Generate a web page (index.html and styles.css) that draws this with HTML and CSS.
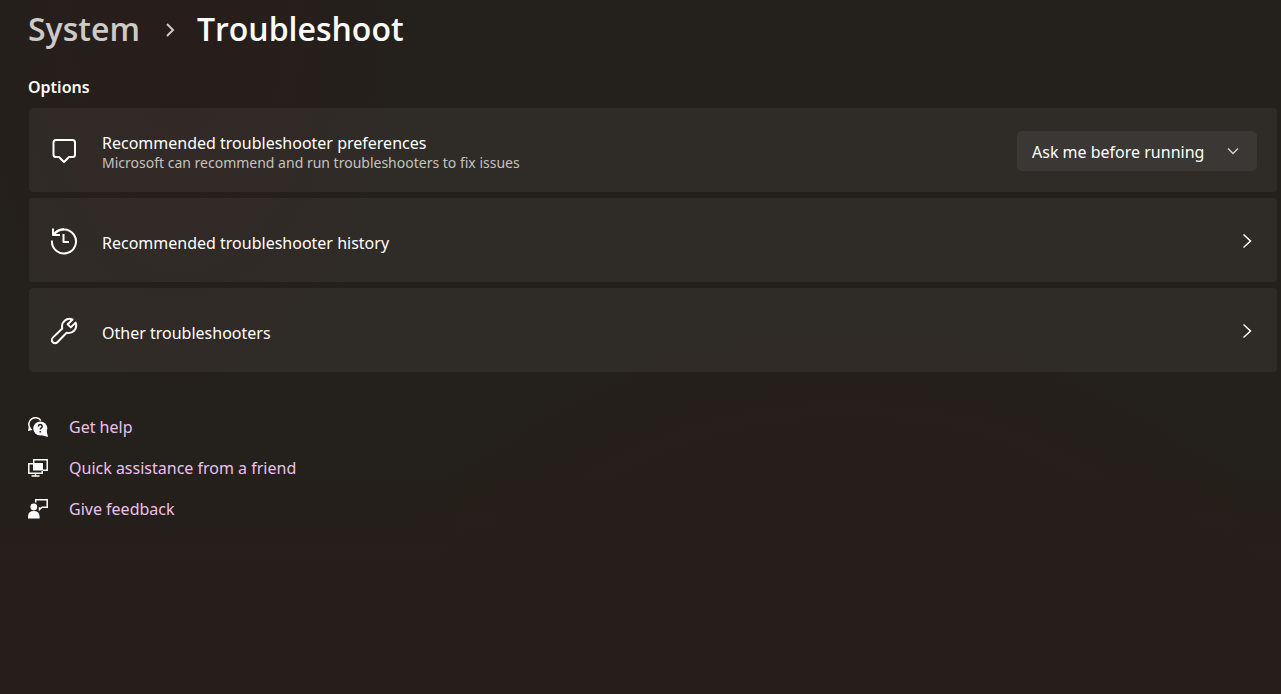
FILE: index.html
```html
<!DOCTYPE html>
<html lang="en">
<head>
<meta charset="utf-8">
<title>System - Troubleshoot</title>
<meta name="viewport" content="width=device-width, initial-scale=1">
<link rel="stylesheet" href="styles.css">
</head>
<body>
<main class="page">
  <nav class="breadcrumb" aria-label="Breadcrumb">
    <a class="crumb" href="#system">System</a>
    <svg class="crumb-sep" viewBox="0 0 12 18" aria-hidden="true"><path d="M3 4l6 6-6 6"/></svg>
    <h1 class="title">Troubleshoot</h1>
  </nav>

  <h2 class="section">Options</h2>
  <div class="cards">
    <div class="card">
      <svg class="icon" viewBox="0 0 28 28" aria-hidden="true"><path d="M6 3H22.500Q25 3 25 5.500V17.500Q25 20 22.500 20H19L14 25L9 20H6Q3.500 20 3.500 17.500V5.500Q3.500 3 6 3Z"/></svg>
      <div class="text">
        <label class="name" for="pref">Recommended troubleshooter preferences</label>
        <span class="desc">Microsoft can recommend and run troubleshooters to fix issues</span>
      </div>
      <div class="dropdown">
        <select id="pref" class="select">
          <option>Ask me before running</option>
        </select>
        <svg class="caret" viewBox="0 0 12 12" aria-hidden="true"><path d="M1 3.500l5 5 5-5"/></svg>
      </div>
    </div>

    <button class="card" type="button">
      <svg class="icon" viewBox="0 0 28 28" aria-hidden="true"><path d="M2 13.500A12 12 0 1 0 4.200 7.500"/><path d="M3 1.500V8H10"/><path d="M3.500 8A12 12 0 0 1 14 2.200"/><path d="M13.500 7V15H19"/></svg>
      <span class="name">Recommended troubleshooter history</span>
      <svg class="chevron" viewBox="0 0 10 16" aria-hidden="true"><path d="M1.500 1.500L8.500 8l-7 6.500"/></svg>
    </button>

    <button class="card" type="button">
      <svg class="icon" viewBox="0 0 28 28" aria-hidden="true"><path d="M22.500 2.500A7.600 7.600 0 0 0 12.300 11.500L2.800 20.600A3.200 3.200 0 0 0 7.400 25.200L16.600 15.800A7.600 7.600 0 0 0 25.600 5.600L20.800 10.400L17.700 7.300Z"/></svg>
      <span class="name">Other troubleshooters</span>
      <svg class="chevron" viewBox="0 0 10 16" aria-hidden="true"><path d="M1.500 1.500L8.500 8l-7 6.500"/></svg>
    </button>
  </div>

  <ul class="links">
    <li>
      <svg class="link-icon" viewBox="0 0 20 20" aria-hidden="true"><path class="line" d="M2 11A6 6 0 1 1 12.800 3.500"/><path d="M0 14l1-5 3.500 4z"/><circle cx="12.300" cy="11.500" r="7"/><path d="M18.500 13.500L20 20l-7-2z"/><path class="mark" d="M10.400 9.400a1.900 1.900 0 1 1 2.900 1.600q-1 .6-1 1.600M12.300 14v1.400"/></svg>
      <a href="#help">Get help</a>
    </li>
    <li>
      <svg class="link-icon" viewBox="0 0 20 20" aria-hidden="true"><path class="line" d="M5.700 5V1.700h13.500v10.600H15"/><path class="line" d="M5 5.700H.8v9.600h13.400V13M7.500 15.300V18M3.500 18h8"/><path d="M5 5h10v7.500H5z"/></svg>
      <a href="#assist">Quick assistance from a friend</a>
    </li>
    <li>
      <svg class="link-icon" viewBox="0 0 20 20" aria-hidden="true"><circle cx="5.800" cy="8" r="3.400"/><path d="M0 19.500v-2q0-5.500 5.800-5.500t5.800 5.500v2z"/><path class="line" d="M7.700 3.500V.8h11.500v7.400H14l-2.500 2.300V8.200"/></svg>
      <a href="#feedback">Give feedback</a>
    </li>
  </ul>
</main>
</body>
</html>
```

FILE: styles.css
```css
* {
  box-sizing: border-box;
}

body {
  margin: 0;
  min-height: 100vh;
  font-family: "Noto Sans", "Open Sans", sans-serif;
  font-size: 16px;
  line-height: 24px;
  color: #fff;
  background:
    radial-gradient(ellipse 18% 60% at 14% 0, #271e1b 20%, transparent),
    radial-gradient(ellipse 40% 54% at 66% 100%, #271e1b 60%, transparent),
    linear-gradient(#24201b 66%, #271e1b 88%);
}

.page {
  padding: 5px 4px 24px 28px;
}

.breadcrumb {
  display: flex;
  align-items: center;
}

.crumb,
.title {
  margin: 0;
  font-family: "Open Sans", "Noto Sans", sans-serif;
  font-size: 32px;
  font-weight: 600;
  line-height: 48px;
}

.crumb {
  color: #cdcac8;
  text-decoration: none;
}

.crumb-sep {
  width: 12px;
  height: 18px;
  margin: 0 21px 0 24px;
  fill: none;
  stroke: #cdcac8;
  stroke-width: 2;
}

.section {
  margin: 22px 0 9px;
  font-size: 16px;
  font-weight: 600;
  line-height: 24px;
}

.cards {
  display: grid;
  gap: 6px;
  padding-left: 1px;
}

.card {
  display: flex;
  align-items: center;
  width: 100%;
  min-height: 84px;
  padding: 2px 20px 0 21px;
  border: 0;
  border-radius: 4px;
  background: rgba(255, 255, 255, 0.05);
  color: inherit;
  font: inherit;
  text-align: left;
}

.icon {
  flex: none;
  width: 28px;
  height: 28px;
  margin-right: 24px;
  fill: none;
  stroke: #fff;
  stroke-width: 2;
  stroke-linejoin: round;
}

.name {
  padding-top: 3px;
}

.text {
  display: grid;
  padding-top: 4px;
}

.text .name,
.desc {
  padding: 0;
  line-height: 20px;
}

.desc {
  font-size: 14px;
  color: #c5c2c0;
}

.chevron {
  width: 10px;
  height: 16px;
  margin: 0 5px 0 auto;
  fill: none;
  stroke: #fff;
  stroke-width: 1.5;
}

.dropdown {
  display: grid;
  align-items: center;
  margin-left: auto;
}

.select,
.caret {
  grid-area: 1 / 1;
}

.select {
  width: 240px;
  height: 40px;
  padding: 2px 44px 0 15px;
  border: 0;
  border-radius: 5px;
  background: #3b3735;
  color: #fff;
  font: inherit;
  appearance: none;
}

.caret {
  justify-self: end;
  width: 12px;
  height: 12px;
  margin-right: 18px;
  fill: none;
  stroke: #d2cfcd;
  stroke-width: 1.5;
  pointer-events: none;
}

.links {
  display: grid;
  gap: 17px;
  margin: 43px 0 0;
  padding: 0;
  list-style: none;
}

.links li {
  display: flex;
  align-items: center;
  gap: 21px;
}

.links a {
  padding-top: 1px;
  color: #ecc0ea;
  text-decoration: none;
  line-height: 23px;
}

.link-icon {
  width: 20px;
  height: 20px;
  fill: #fff;
}

.link-icon .line {
  fill: none;
  stroke: #fff;
  stroke-width: 1.5;
}

.link-icon .mark {
  fill: none;
  stroke: #25201b;
  stroke-width: 1.5;
}
```
